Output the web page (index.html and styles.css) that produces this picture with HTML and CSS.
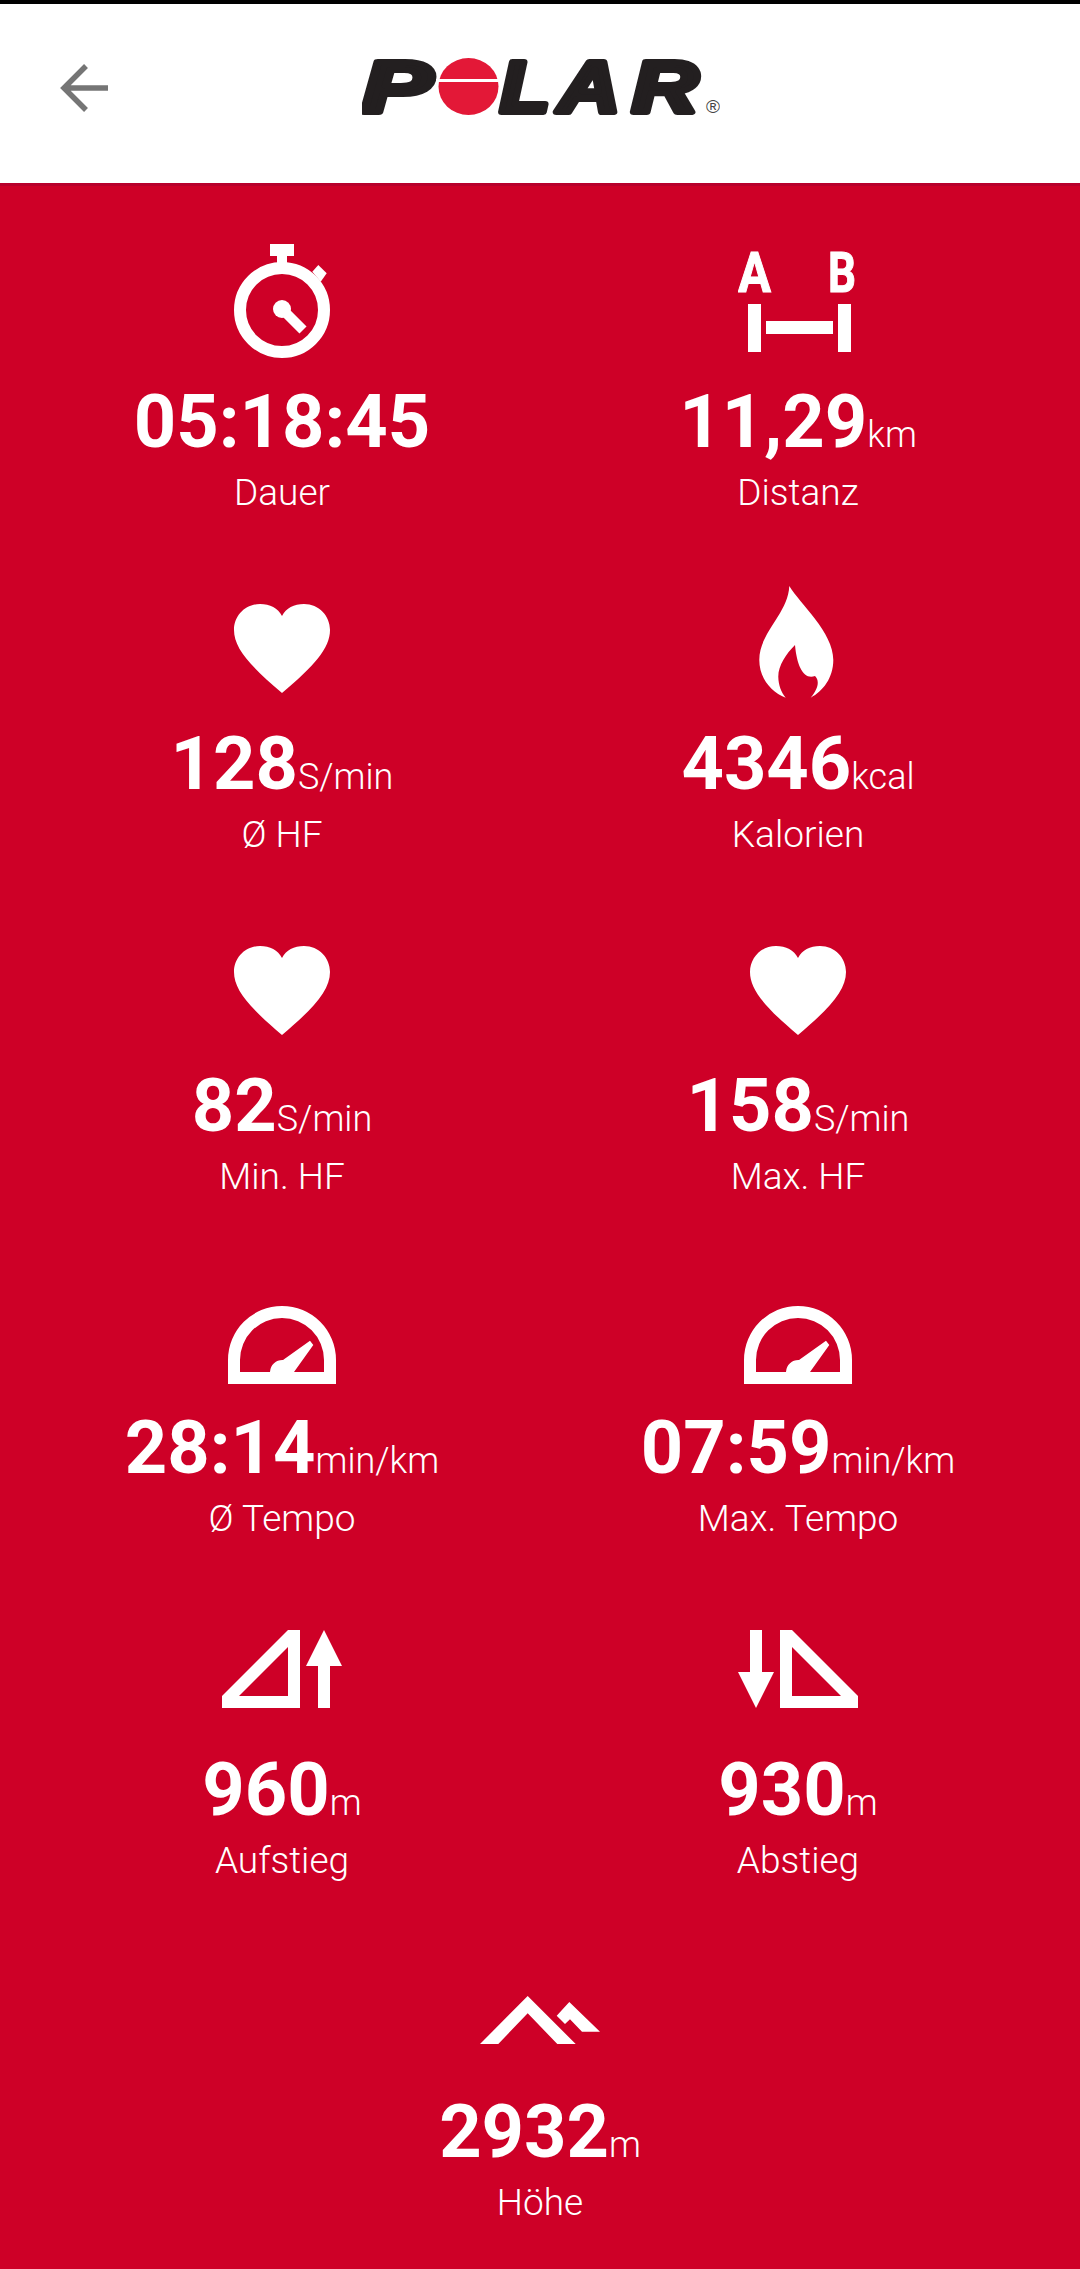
FILE: index.html
```html
<!DOCTYPE html>
<html lang="de">
<head>
  <meta charset="UTF-8">
  <meta name="viewport" content="width=device-width, initial-scale=1.0">
  <title>Polar Flow</title>
  <link rel="stylesheet" href="styles.css">
</head>
<body>
  <!-- Kopfzeile -->
  <header class="topbar">
    <a class="back" href="#" aria-label="Zurück">
      <svg width="48" height="48" viewBox="0 0 48 48" fill="none" stroke="#757575" stroke-width="5.5">
        <path d="M26 2 L4 24 L26 46 M4 24 H48"/>
      </svg>
    </a>
    <svg class="logo" width="358" height="100" viewBox="0 -20 358 100">
      <g class="logo-letters">
        <text x="0" y="54" textLength="70" lengthAdjust="spacingAndGlyphs">P</text>
        <text x="138" y="54" textLength="50" lengthAdjust="spacingAndGlyphs">L</text>
        <text x="196" y="54" textLength="62" lengthAdjust="spacingAndGlyphs">A</text>
        <text x="270" y="54" textLength="66" lengthAdjust="spacingAndGlyphs">R</text>
      </g>
      <ellipse cx="106.5" cy="28.5" rx="30" ry="28.5" fill="#e31837"/>
      <rect x="74" y="21" width="66" height="3" fill="#fff"/>
      <text class="logo-mark" x="344" y="55">®</text>
    </svg>
  </header>

  <!-- Trainingswerte -->
  <main class="stats">
    <section class="stat">
      <svg class="icon" viewBox="0 0 120 120">
        <rect x="48" y="4" width="24" height="12"/>
        <rect x="55" y="16" width="10" height="12"/>
        <polygon points="90.3,31.7 96.3,25 104.7,33.3 98.7,41.7"/>
        <circle cx="60" cy="70" r="42" fill="none" stroke="#fff" stroke-width="12"/>
        <circle cx="60" cy="69" r="9"/>
        <path d="M60 69 L81 90" fill="none" stroke="#fff" stroke-width="10"/>
      </svg>
      <div class="value">05:18:45</div>
      <div class="label">Dauer</div>
    </section>

    <section class="stat">
      <svg class="icon" viewBox="0 0 120 120">
        <text class="ab" x="0" y="52" textLength="33" lengthAdjust="spacingAndGlyphs">A</text>
        <text class="ab" x="90" y="52" textLength="28" lengthAdjust="spacingAndGlyphs">B</text>
        <rect x="10" y="64" width="13" height="48"/>
        <rect x="28" y="81" width="67" height="13"/>
        <rect x="100" y="64" width="13" height="48"/>
      </svg>
      <div class="value">11,29<span class="unit">km</span></div>
      <div class="label">Distanz</div>
    </section>

    <section class="stat">
      <svg class="icon" viewBox="0 0 120 120"><use href="#heart"/></svg>
      <div class="value">128<span class="unit">S/min</span></div>
      <div class="label">Ø HF</div>
    </section>

    <section class="stat">
      <svg class="icon" viewBox="0 0 120 120">
        <path d="M51.3 4 C62 22 95.3 50 95.3 78 C95.3 96 85 109 72.7 115.7 C80 107 82 99 77 94 C66 98 59 85 57 63 C48 72 40 84 40.3 95 C40.5 103 43 110 47.7 115.7 C33 110 21.3 96 21.3 78 C21.3 50 50 32 51.3 4 Z"/>
      </svg>
      <div class="value">4346<span class="unit">kcal</span></div>
      <div class="label">Kalorien</div>
    </section>

    <section class="stat">
      <svg class="icon" viewBox="0 0 120 120">
        <path id="heart" d="M60 34 C64 26 72 22 82 22 C97 22 108 34 108 48 C108 66 92 84 60 111 C28 84 12 66 12 48 C12 34 23 22 38 22 C48 22 56 26 60 34 Z"/>
      </svg>
      <div class="value">82<span class="unit">S/min</span></div>
      <div class="label">Min. HF</div>
    </section>

    <section class="stat">
      <svg class="icon" viewBox="0 0 120 120"><use href="#heart"/></svg>
      <div class="value">158<span class="unit">S/min</span></div>
      <div class="label">Max. HF</div>
    </section>

    <section class="stat">
      <svg class="icon" viewBox="0 0 120 120">
        <path id="gauge" fill-rule="evenodd" d="M6 118 V94 A54 54 0 0 1 114 94 V118 Z M18 106 H48 A12.5 12.5 0 0 1 61 94 L88 74.7 L91.3 79 L72 106 H102 V94 A42 42 0 0 0 18 94 Z"/>
      </svg>
      <div class="value">28:14<span class="unit">min/km</span></div>
      <div class="label">Ø Tempo</div>
    </section>

    <section class="stat">
      <svg class="icon" viewBox="0 0 120 120"><use href="#gauge"/></svg>
      <div class="value">07:59<span class="unit">min/km</span></div>
      <div class="label">Max. Tempo</div>
    </section>

    <section class="stat">
      <svg class="icon" viewBox="0 0 120 120">
        <path fill-rule="evenodd" d="M0 100 V88 L66 22 H78 V100 Z M66 39 L17 88 H66 Z"/>
        <polygon points="102,22 120,58 108,58 108,100 96,100 96,58 84,58"/>
      </svg>
      <div class="value">960<span class="unit">m</span></div>
      <div class="label">Aufstieg</div>
    </section>

    <section class="stat">
      <svg class="icon" viewBox="0 0 120 120">
        <polygon points="12,22 24,22 24,64 36,64 18,100 0,64 12,64"/>
        <path fill-rule="evenodd" d="M42 22 H54 L120 88 V100 H42 Z M54 39 V88 H103 Z"/>
      </svg>
      <div class="value">930<span class="unit">m</span></div>
      <div class="label">Abstieg</div>
    </section>

    <section class="stat wide">
      <svg class="icon" viewBox="0 0 120 120">
        <polygon points="0,94 47.7,46 95.7,94 77.3,94 47.7,63.3 18.3,94"/>
        <polygon points="76.7,65.7 89.3,52 120,81.7 102,81.7 90,69.3 85,74"/>
      </svg>
      <div class="value">2932<span class="unit">m</span></div>
      <div class="label">Höhe</div>
    </section>
  </main>
</body>
</html>
```

FILE: styles.css
```css
/* Basis */
html, body {
  margin: 0;
  padding: 0;
}

body {
  display: flex;
  flex-direction: column;
  min-height: 100vh;
  font-family: Roboto, "Noto Sans", sans-serif;
  background: #ce0027;
  color: #fff;
}

/* Kopfzeile */
.topbar {
  display: flex;
  align-items: center;
  justify-content: center;
  position: relative;
  height: 167px;
  padding-bottom: 12px;
  border-top: 4px solid #000;
  background: #fff;
}

.back {
  position: absolute;
  left: 60px;
  top: 60px;
  height: 48px;
}

.logo {
  margin-left: 2px;
}

.logo-letters {
  font-family: "Liberation Sans", sans-serif;
  font-size: 72px;
  font-weight: bold;
  font-style: italic;
  fill: #231f20;
  stroke: #231f20;
  stroke-width: 6px;
  stroke-linejoin: round;
}

.logo-mark {
  font-family: "Liberation Sans", sans-serif;
  font-size: 19px;
  fill: #444;
}

/* Werte */
.stats {
  flex: 1;
  display: grid;
  grid-template-columns: 1fr 1fr;
  grid-template-rows: repeat(5, 342px) auto;
  padding: 54px 24px 0;
  border-top: 3px solid #b8002b;
}

.stat {
  display: flex;
  flex-direction: column;
  align-items: center;
}

.stat.wide {
  grid-column: span 2;
}

.icon {
  width: 120px;
  height: 120px;
  fill: #fff;
}

.ab {
  font-family: Roboto, sans-serif;
  font-size: 56px;
  font-weight: 700;
  stroke: #fff;
  stroke-width: 1px;
}

.value {
  margin-top: 16px;
  font-size: 74px;
  font-weight: 700;
  line-height: 92px;
  white-space: nowrap;
}

.unit {
  font-size: 36px;
  font-weight: 300;
  line-height: 0;
}

.label {
  margin-top: 3px;
  font-size: 37px;
  font-weight: 300;
  line-height: 44px;
}
```
